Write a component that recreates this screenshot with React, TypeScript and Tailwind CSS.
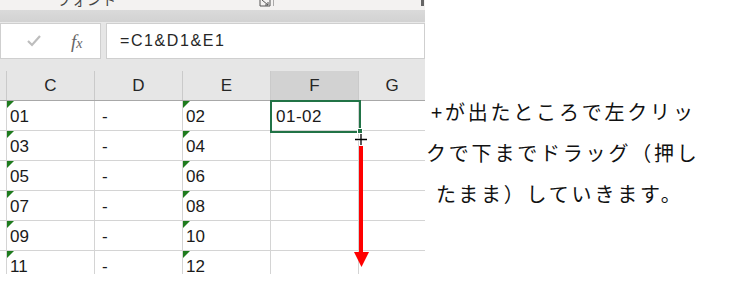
import React from "react";

const cols = ["C", "D", "E", "F", "G"];
const widths = ["w-[88px]", "w-[88px]", "w-[88px]", "w-[88px]", "w-[66px]"];
const rows = [
  ["01", "-", "02", "01-02"],
  ["03", "-", "04", ""],
  ["05", "-", "06", ""],
  ["07", "-", "08", ""],
  ["09", "-", "10", ""],
  ["11", "-", "12", ""],
];

const Tri = () => (
  <svg className="absolute left-0 top-0" width="7" height="7" viewBox="0 0 7 7">
    <polygon points="0,0 7,0 0,7" fill="#1e7b1e" />
  </svg>
);

export default function App() {
  const cellFont = { fontFamily: '"Liberation Sans", Arial, sans-serif' };
  return (
    <div className="w-[743px] h-[294px] bg-white flex overflow-hidden">
      {/* Excel area */}
      <div className="w-[425px] h-[274px] flex flex-col relative" style={cellFont}>
        {/* ribbon bottom */}
        <div className="h-[10px] bg-[#f3f2f1] flex items-start relative overflow-hidden">
          <div className="ml-[57px] -mt-[9px] text-[14px] leading-[16px] text-[#444] tracking-[1px]" style={{ fontFamily: '"Noto Sans CJK JP", sans-serif' }}>
            フォント
          </div>
          <svg className="ml-[142px]" width="12" height="7" viewBox="0 0 12 7">
            <path d="M1 0 V6 H11 V0" fill="none" stroke="#555" strokeWidth="1" />
            <path d="M3 0 L9 5 M9 2 V5 H6" fill="none" stroke="#555" strokeWidth="1" />
          </svg>
          <div className="ml-[2px] w-[1px] h-[6px] bg-[#aaa]" />
          <div className="ml-auto mr-[1px] w-[3px] h-[6px] bg-[#666]" />
        </div>
        <div className="h-[13px] bg-gradient-to-b from-[#dadada] to-[#d2d2d2] border-b border-[#e9e9e9]" />
        {/* formula bar */}
        <div className="h-[36px] bg-[#e6e6e6] flex">
          <div className="w-[101px] bg-white border border-[#cfcfcf] flex items-center">
            <svg className="ml-[25px]" width="16" height="14" viewBox="0 0 16 14">
              <path d="M2 7 L6 11 L14 2" fill="none" stroke="#bdbdbd" strokeWidth="2.2" />
            </svg>
            <span className="ml-[29px] italic text-[#666] text-[19px] leading-none" style={{ fontFamily: '"Liberation Serif", serif' }}>
              f<span className="text-[14px]">x</span>
            </span>
          </div>
          <div className="ml-[5px] flex-1 bg-white border border-[#cfcfcf] flex items-center">
            <span className="ml-[13px] text-[16px] tracking-[1.6px] text-[#262626]">=C1&amp;D1&amp;E1</span>
          </div>
        </div>
        <div className="h-[12px] bg-[#e6e6e6]" />
        {/* header row */}
        <div className="flex h-[30px] bg-[#e6e6e6] border-b border-[#a8a8a8]">
          <div className="w-[7px] border-r border-[#cacaca]" />
          {cols.map((c, i) => (
            <div
              key={c}
              className={`${widths[i]} flex items-center justify-center text-[17px] text-[#262626] ${i < 4 ? "border-r border-[#cacaca]" : ""} ${c === "F" ? "bg-[#d2d2d2] text-[#1f5c3a]" : ""}`}
            >
              {c}
            </div>
          ))}
        </div>
        {/* data rows */}
        <div className="flex-1 overflow-hidden">
          {rows.map((r, ri) => (
            <div key={ri} className="flex h-[30px] border-b border-[#d4d4d4]">
              <div className="w-[7px] border-r border-[#d4d4d4]" />
              {[0, 1, 2, 3, 4].map((ci) => (
                <div
                  key={ci}
                  className={`${widths[ci]} relative flex items-center pt-[2px] ${ci < 4 ? "border-r border-[#d4d4d4]" : ""} text-[17px] text-[#1a1a1a]`}
                >
                  {(ci === 0 || ci === 2) && <Tri />}
                  {ci < 4 && r[ci] ? (
                    <span className={`${ci === 1 ? "ml-[7px]" : "ml-[3px]"} ${ci === 3 ? "ml-[5px] tracking-[0.5px]" : ""}`}>{r[ci]}</span>
                  ) : null}
                </div>
              ))}
            </div>
          ))}
        </div>
        {/* selection overlay */}
        <div className="absolute left-[270px] top-[100px] w-[91px] h-[33px] border-2 border-[#217346]" />
        <div className="absolute left-[357px] top-[128px] w-[6px] h-[6px] bg-[#217346] border border-white" />
        {/* cursor */}
        <svg className="absolute left-[354px] top-[133px]" width="14" height="13" viewBox="0 0 14 13">
          <path d="M7 1 V12 M1 6.5 H13" stroke="#fff" strokeWidth="3" />
          <path d="M7 1 V12 M1 6.5 H13" stroke="#000" strokeWidth="1.3" />
        </svg>
        {/* red arrow */}
        <svg className="absolute left-[353px] top-[146px]" width="17" height="122" viewBox="0 0 17 122">
          <rect x="6" y="0" width="4" height="108" fill="#ff0000" />
          <polygon points="1,106 16,106 8.5,121" fill="#ff0000" />
        </svg>
      </div>
      {/* explanation text */}
      <div
        className="flex-1 pt-[91px] text-[20px] leading-[41px] text-[#111] tracking-[2.8px] whitespace-pre"
        style={{ fontFamily: '"Noto Sans CJK JP", sans-serif' }}
      >
        <div className="pl-[6px]">+が出たところで左クリッ</div>
        <div className="pl-[1px]">クで下までドラッグ（押し</div>
        <div className="pl-[11px]">たまま）していきます。</div>
      </div>
    </div>
  );
}
